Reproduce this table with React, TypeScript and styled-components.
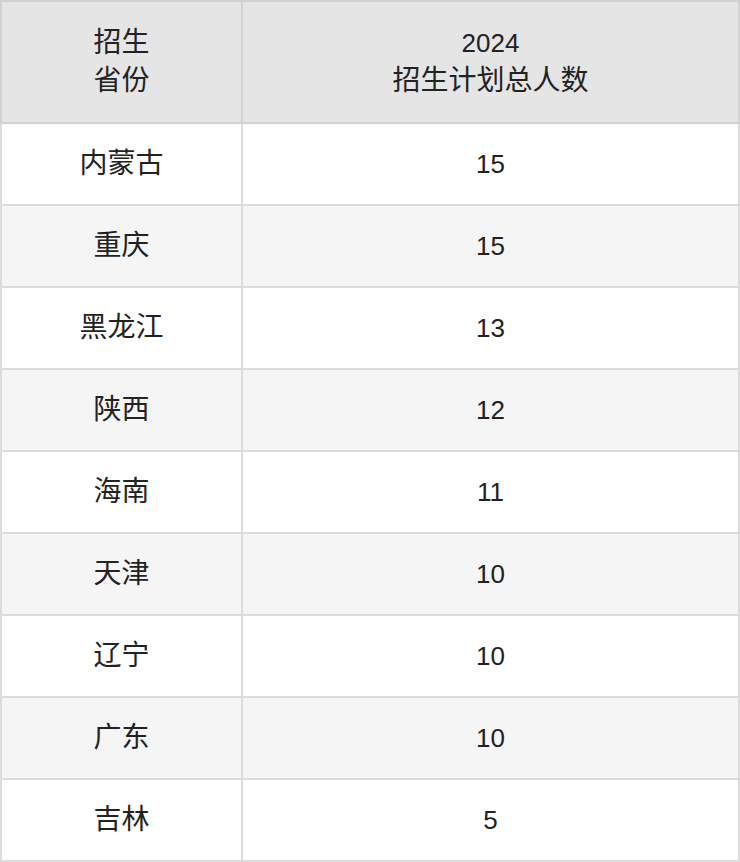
import React from 'react';
import styled, { createGlobalStyle } from 'styled-components';

const GlobalStyle = createGlobalStyle`
  html, body {
    margin: 0;
    padding: 0;
    background: #fff;
  }
  body {
    font-family: 'Liberation Sans', Arial, 'Noto Sans CJK SC', sans-serif;
  }
`;

const Table = styled.table`
  width: 740px;
  border-collapse: collapse;
  table-layout: fixed;
  color: #222;
`;

const HeadCell = styled.th<{ $width?: number }>`
  width: ${(p) => (p.$width ? `${p.$width}px` : 'auto')};
  height: 120px;
  padding: 0;
  background-color: #e5e5e5;
  border: 2px solid #d2d2d2;
  font-weight: normal;
  font-size: 28px;
  line-height: 38px;
  text-align: center;
  vertical-align: middle;
`;

const Digits = styled.span`
  font-size: 26px;
`;

const Row = styled.tr<{ $striped: boolean }>`
  background-color: ${(p) => (p.$striped ? '#f5f5f5' : '#fff')};
`;

const Cell = styled.td<{ $numeric?: boolean }>`
  height: 80px;
  padding: 0;
  border: 2px solid #dcdcdc;
  font-size: ${(p) => (p.$numeric ? '26px' : '28px')};
  line-height: 34px;
  text-align: center;
  vertical-align: middle;
`;

interface PlanRow {
  province: string;
  total: number;
}

const rows: PlanRow[] = [
  { province: '内蒙古', total: 15 },
  { province: '重庆', total: 15 },
  { province: '黑龙江', total: 13 },
  { province: '陕西', total: 12 },
  { province: '海南', total: 11 },
  { province: '天津', total: 10 },
  { province: '辽宁', total: 10 },
  { province: '广东', total: 10 },
  { province: '吉林', total: 5 },
];

const App: React.FC = () => {
  return (
    <>
      <GlobalStyle />
      <Table>
        <thead>
          <tr>
            <HeadCell $width={239}>
              招生
              <br />
              省份
            </HeadCell>
            <HeadCell>
              <Digits>2024</Digits>
              <br />
              招生计划总人数
            </HeadCell>
          </tr>
        </thead>
        <tbody>
          {rows.map((row, i) => (
            <Row key={row.province} $striped={i % 2 === 1}>
              <Cell>{row.province}</Cell>
              <Cell $numeric>{row.total}</Cell>
            </Row>
          ))}
        </tbody>
      </Table>
    </>
  );
};

export default App;
